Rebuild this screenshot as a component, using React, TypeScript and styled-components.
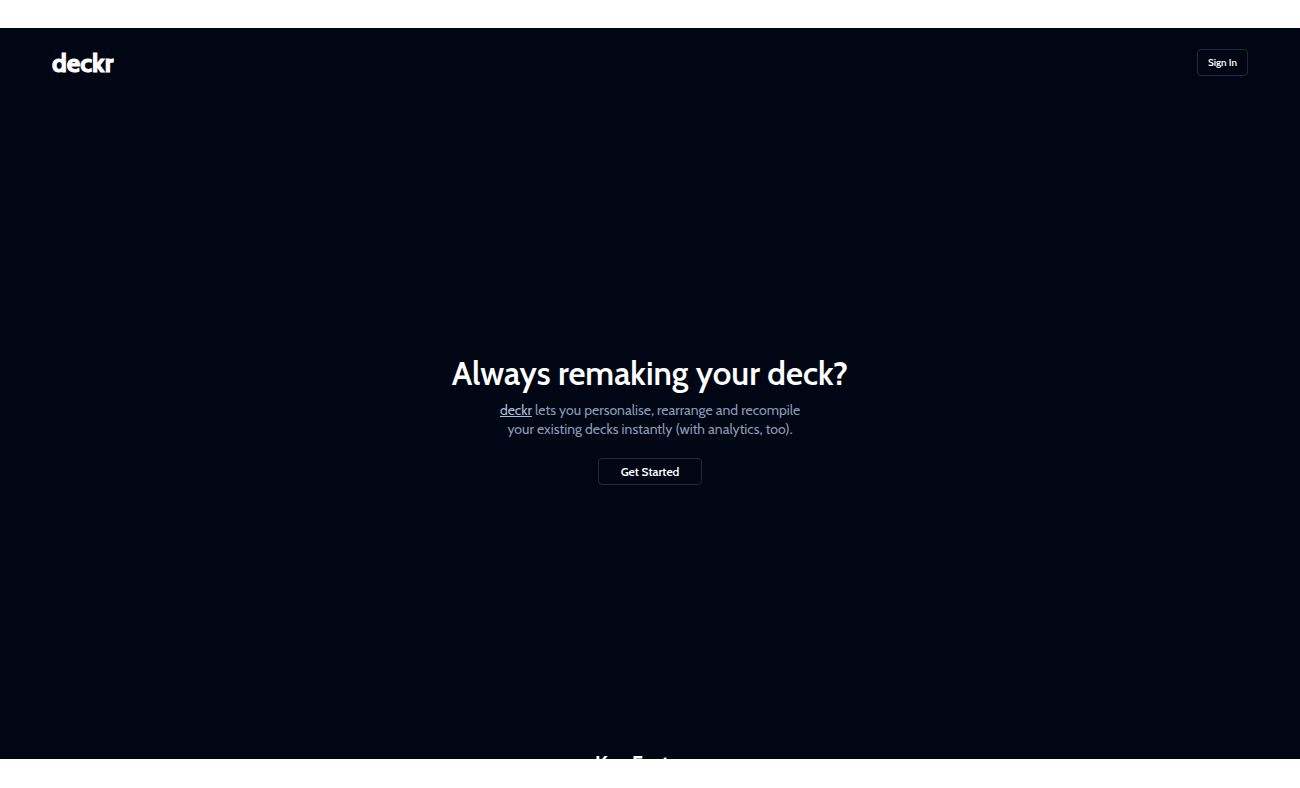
import React from "react";
import styled, { createGlobalStyle } from "styled-components";

const GlobalStyle = createGlobalStyle`
  *, *::before, *::after { box-sizing: border-box; }
  body {
    margin: 0;
    background: #ffffff;
    font-family: Cabin, Lato, "Open Sans", sans-serif;
  }
`;

const Frame = styled.div`
  display: flex;
  height: 100vh;
  padding: 28px 0 29px;
`;

const Page = styled.div`
  display: flex;
  flex: 1;
  flex-direction: column;
  overflow: hidden;
  background: #000614;
  color: #ffffff;
`;

const Header = styled.header`
  display: flex;
  flex: none;
  align-items: center;
  justify-content: space-between;
  height: 69px;
  padding: 0 4%;
`;

const Logo = styled.a`
  color: #ffffff;
  font-size: 26px;
  font-weight: 700;
  line-height: 32px;
  text-decoration: none;
  -webkit-text-stroke: 1px #ffffff;
`;

const Button = styled.button<{ $wide?: boolean }>`
  height: 27px;
  padding: 0 ${(p) => (p.$wide ? 22 : 10)}px;
  border: 1px solid #222a38;
  border-radius: 4px;
  background: transparent;
  color: #ffffff;
  font-family: inherit;
  font-size: ${(p) => (p.$wide ? 12 : 10)}px;
  font-weight: 600;
  cursor: pointer;
`;

const Hero = styled.main`
  display: flex;
  flex: 1;
  flex-direction: column;
  align-items: center;
  justify-content: center;
  padding-bottom: 10px;
  text-align: center;
`;

const Title = styled.h1`
  margin: 0 0 8px;
  font-size: 33px;
  font-weight: 600;
  line-height: 40px;
`;

const Lead = styled.p`
  max-width: 320px;
  margin: 0 0 19px;
  color: #8a9bb4;
  font-size: 14px;
  line-height: 19px;
`;

const LeadLink = styled.a`
  color: #a9bdda;
`;

const Features = styled.section`
  flex: none;
  height: 8px;
  text-align: center;
`;

const FeaturesTitle = styled.h2`
  margin: 0;
  font-size: 20px;
  font-weight: 700;
  line-height: 24px;
`;

export default function App() {
  return (
    <>
      <GlobalStyle />
      <Frame>
        <Page>
          <Header>
            <Logo href="#">deckr</Logo>
            <Button type="button">Sign In</Button>
          </Header>
          <Hero>
            <Title>Always remaking your deck?</Title>
            <Lead>
              <LeadLink href="#">deckr</LeadLink> lets you personalise, rearrange and recompile
              your existing decks instantly (with analytics, too).
            </Lead>
            <Button type="button" $wide>
              Get Started
            </Button>
          </Hero>
          <Features>
            <FeaturesTitle>Key Features</FeaturesTitle>
          </Features>
        </Page>
      </Frame>
    </>
  );
}
